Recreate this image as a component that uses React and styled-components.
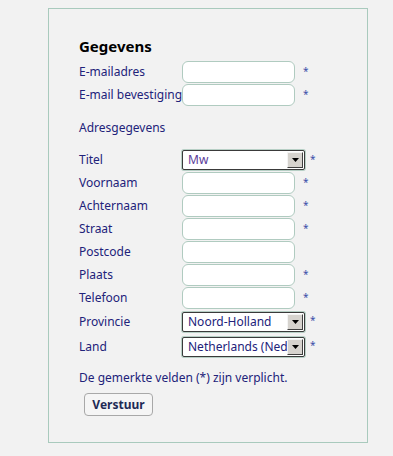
import styled, { createGlobalStyle } from 'styled-components';

const GlobalStyle = createGlobalStyle`
  html, body {
    margin: 0;
    padding: 0;
    background: #f2f2f2;
  }
  body {
    font-family: "Noto Sans", "Open Sans", sans-serif;
  }
`;

const FormBox = styled.form`
  box-sizing: border-box;
  margin: 8px 0 0 48px;
  width: 320px;
  height: 435px;
  border: 1px solid #a9cabd;
  padding: 28px 0 0 30px;
`;

const Heading = styled.h2`
  margin: 0 0 5px 0;
  font-size: 15px;
  line-height: 18px;
  font-weight: bold;
  color: #000;
`;

const Row = styled.div`
  display: flex;
  align-items: center;
  height: ${(p) => p.$h || 23}px;
`;

const Label = styled.label`
  flex: none;
  width: 103px;
  font-size: 12px;
  color: #22227a;
  white-space: nowrap;
`;

const TextInput = styled.input`
  box-sizing: border-box;
  width: 113px;
  height: 22px;
  margin: 0;
  border: 1px solid #b0cbc0;
  border-radius: 6px;
  background: #fff;
  outline: none;
`;

const Star = styled.span`
  margin-left: ${(p) => p.$gap || 8}px;
  font-size: 10px;
  color: #3a4fa8;
  align-self: flex-start;
  padding-top: 4px;
`;

const SubHeading = styled.div`
  height: 42px;
  display: flex;
  align-items: center;
  font-size: 12px;
  color: #22227a;
`;

const SelectBox = styled.div`
  box-sizing: border-box;
  width: 123px;
  height: 20px;
  display: flex;
  align-items: center;
  border: 1px solid #3a3a3a;
  border-radius: 2px;
  box-shadow: 0 0 0 1px #b7cfc5;
  background: #fff;
  padding: 0 1px 0 5px;
`;

const SelectText = styled.span`
  flex: 1;
  min-width: 0;
  overflow: hidden;
  white-space: nowrap;
  font-size: 12px;
  color: ${(p) => (p.$accent ? '#5a3c9a' : '#22227a')};
`;

const ArrowButton = styled.span`
  box-sizing: border-box;
  flex: none;
  width: 16px;
  height: 16px;
  display: flex;
  align-items: center;
  justify-content: center;
  background: #d6d3ce;
  border: 1px solid;
  border-color: #f4f4f4 #404040 #404040 #f4f4f4;
`;

const Note = styled.p`
  margin: 0;
  padding: 11px 0 6px;
  line-height: 16px;
  font-size: 12px;
  color: #22227a;
`;

const Button = styled.button`
  box-sizing: border-box;
  margin-left: 5px;
  width: 69px;
  height: 23px;
  border: 1px solid #a8a8a8;
  border-radius: 4px;
  background: #f5f5f5;
  font-family: "Noto Sans", "Open Sans", sans-serif;
  font-size: 12px;
  font-weight: bold;
  color: #1e2a55;
  padding: 0;
`;

function Select({ value, accent }) {
  return (
    <SelectBox>
      <SelectText $accent={accent}>{value}</SelectText>
      <ArrowButton>
        <svg width="7" height="4" viewBox="0 0 7 4">
          <polygon points="0,0 7,0 3.5,4" fill="#000" />
        </svg>
      </ArrowButton>
    </SelectBox>
  );
}

function Field({ label, required }) {
  return (
    <Row>
      <Label>{label}</Label>
      <TextInput type="text" />
      {required && <Star>*</Star>}
    </Row>
  );
}

function SelectField({ label, value, accent, h }) {
  return (
    <Row $h={h}>
      <Label>{label}</Label>
      <Select value={value} accent={accent} />
      <Star $gap={5}>*</Star>
    </Row>
  );
}

export default function App() {
  return (
    <>
      <GlobalStyle />
      <FormBox onSubmit={(e) => e.preventDefault()}>
        <Heading>Gegevens</Heading>
        <Field label="E-mailadres" required />
        <Field label="E-mail bevestiging" required />
        <SubHeading>Adresgegevens</SubHeading>
        <SelectField label="Titel" value="Mw" accent h={23} />
        <Field label="Voornaam" required />
        <Field label="Achternaam" required />
        <Field label="Straat" required />
        <Field label="Postcode" />
        <Field label="Plaats" required />
        <Field label="Telefoon" required />
        <SelectField label="Provincie" value="Noord-Holland" h={25} />
        <SelectField label="Land" value="Netherlands (Nederland)" h={25} />
        <Note>De gemerkte velden (*) zijn verplicht.</Note>
        <Button type="submit">Verstuur</Button>
      </FormBox>
    </>
  );
}
